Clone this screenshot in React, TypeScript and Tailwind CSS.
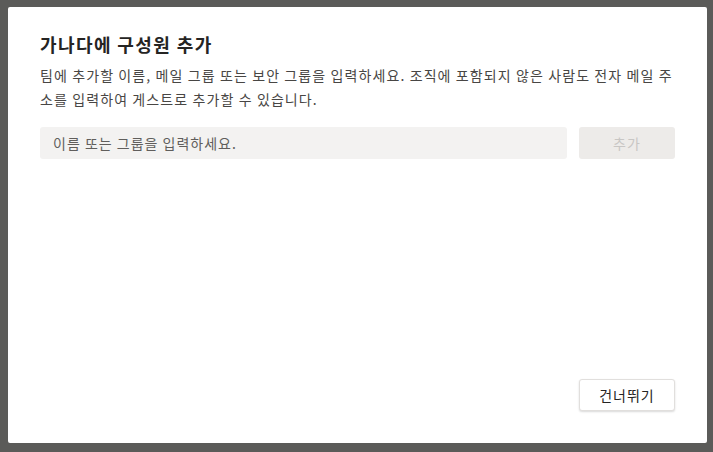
export default function App() {
  return (
    <div
      className="w-[713px] h-[452px] bg-[#5b5b59] pt-[7px] pl-[8px] overflow-hidden"
      style={{ fontFamily: '"Noto Sans CJK KR", "Noto Sans", sans-serif' }}
    >
      <div className="w-[699px] h-[436px] bg-white rounded-[2px] px-8 pt-[20px] pb-8 flex flex-col">
        <h1 className="text-[18px] leading-[34px] font-semibold tracking-[1.4px] text-[#252423]">가나다에 구성원 추가</h1>
        <p className="mt-[2px] text-[14px] leading-[24px] tracking-[1.1px] text-[#484644]">
          팀에 추가할 이름, 메일 그룹 또는 보안 그룹을 입력하세요. 조직에 포함되지 않은 사람도 전자 메일 주소를 입력하여 게스트로 추가할 수 있습니다.
        </p>
        <div className="mt-4 flex gap-3">
          <input
            className="flex-1 h-8 bg-[#f3f2f1] rounded-[3px] px-[13px] text-[14px] tracking-[1px] text-[#252423] placeholder:text-[#605e5c] outline-none"
            placeholder="이름 또는 그룹을 입력하세요."
          />
          <button
            disabled
            className="w-24 h-8 bg-[#edebe9] rounded-[3px] text-[14px] tracking-[1px] text-[#c8c6c4]"
          >
            추가
          </button>
        </div>
        <div className="flex-1" />
        <div className="flex justify-end">
          <button className="w-24 h-8 bg-white border border-[#e1dfdd] rounded-[3px] shadow-[0_1px_2px_rgba(0,0,0,0.15)] text-[14px] tracking-[1px] text-[#252423]">
            건너뛰기
          </button>
        </div>
      </div>
    </div>
  );
}
